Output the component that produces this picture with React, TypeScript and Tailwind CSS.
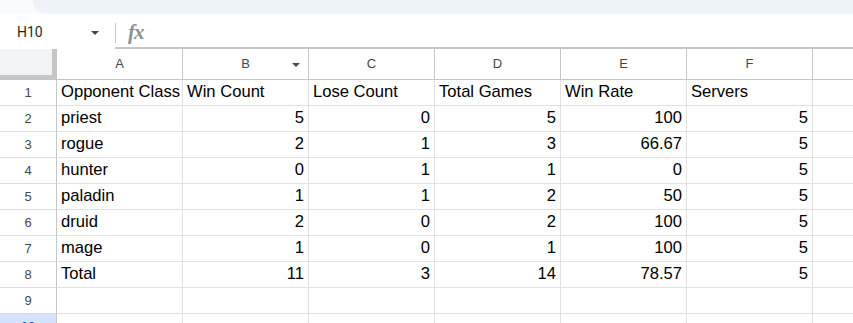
import React from "react";

const headers = ["A", "B", "C", "D", "E", "F", ""];
const rows: (string | number)[][] = [
  ["Opponent Class", "Win Count", "Lose Count", "Total Games", "Win Rate", "Servers"],
  ["priest", 5, 0, 5, 100, 5],
  ["rogue", 2, 1, 3, 66.67, 5],
  ["hunter", 0, 1, 1, 0, 5],
  ["paladin", 1, 1, 2, 50, 5],
  ["druid", 2, 0, 2, 100, 5],
  ["mage", 1, 0, 1, 100, 5],
  ["Total", 11, 3, 14, 78.57, 5],
  ["", "", "", "", "", ""],
  ["", "", "", "", "", ""],
];

export default function App() {
  return (
    <div className="w-[853px] h-[323px] overflow-hidden bg-white font-['Liberation_Sans',Arial,sans-serif] text-black">
      {/* top toolbar remnant */}
      <div className="h-[14px] bg-[#f9fbfd] pl-[33px]">
        <div className="h-full bg-[#eef2f9] rounded-bl-[14px]" />
      </div>
      {/* formula bar */}
      <div className="h-[35px] flex">
        <div className="w-[115px] flex items-center justify-between pl-[17px] pr-[16px] pt-[2px]">
          <span className="text-[14px] text-[#1f1f1f] font-['Roboto','Liberation_Sans',sans-serif]">H10</span>
          <span className="w-0 h-0 border-l-[4px] border-r-[4px] border-t-[4px] border-l-transparent border-r-transparent border-t-[#444746]" />
        </div>
        <div className="flex-1 flex items-start border-b-2 border-[#c4c7c5]">
          <div className="w-px h-[20px] mt-[9px] bg-[#c4c7c5]" />
          <span className="ml-[12px] mt-[6px] text-[21px] leading-[24px] italic font-bold text-[#8e9194] font-['Liberation_Serif',serif] tracking-[-1px]">
            fx
          </span>
        </div>
      </div>
      {/* grid */}
      <div className="w-[939px] grid grid-cols-[57px_repeat(7,126px)]">
        <div className="h-[31px] bg-[#f1f3f4] border-r-[5px] border-b-[5px] border-[#c4c7c5]" />
        {headers.map((h, i) => (
          <div
            key={i}
            className="relative h-[31px] flex items-center justify-center border-r border-b border-[#c4c7c5] text-[13px] text-[#444746]"
          >
            {h}
            {h === "B" && (
              <span className="absolute right-[8px] top-[14px] w-0 h-0 border-l-[4px] border-r-[4px] border-t-[4px] border-l-transparent border-r-transparent border-t-[#444746]" />
            )}
          </div>
        ))}
        {rows.map((r, ri) => (
          <React.Fragment key={ri}>
            <div
              className={`h-[26px] flex items-center justify-center border-r border-b border-r-[#c4c7c5] border-b-[#dadce0] text-[13px] ${
                ri === 9 ? "bg-[#d3e3fd] text-[#0b57d0] font-bold" : "text-[#444746]"
              }`}
            >
              {ri + 1}
            </div>
            {r.map((c, ci) => (
              <div
                key={ci}
                className={`h-[26px] flex items-center border-r border-b border-[#e1e1e1] text-[16.6px] whitespace-nowrap overflow-visible ${
                  typeof c === "number" ? "justify-end pr-[4px]" : "justify-start pl-[4px]"
                }`}
              >
                {c}
              </div>
            ))}
            <div className="h-[26px] border-r border-b border-[#e1e1e1]" />
          </React.Fragment>
        ))}
      </div>
    </div>
  );
}
